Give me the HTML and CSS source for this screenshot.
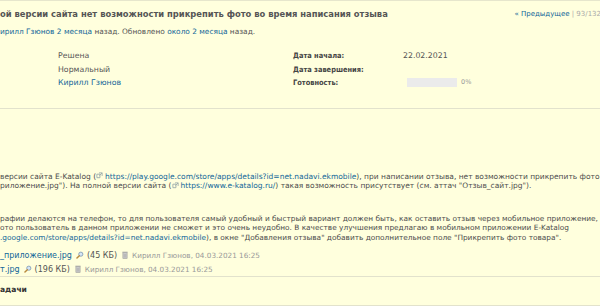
FILE: index.html
```html
<!DOCTYPE html>
<html lang="ru">
<head>
<meta charset="utf-8">
<link rel="stylesheet" href="styles.css">
</head>
<body>
<div class="issue">
  <div class="head">
    <h3 class="subject">ой версии сайта нет возможности прикрепить фото во время написания отзыва</h3>
    <div class="nav"><a href="#">« Предыдущее</a> | 93/132</div>
  </div>
  <p class="author"><a href="#">ирилл Гзюнов</a> <a href="#">2 месяца</a> назад. Обновлено <a href="#">около 2 месяца</a> назад.</p>

  <div class="attrs">
    <div class="val">Решена</div>
    <div class="lbl">Дата начала:</div>
    <div class="val">22.02.2021</div>

    <div class="val">Нормальный</div>
    <div class="lbl">Дата завершения:</div>
    <div class="val"></div>

    <div class="val"><a href="#">Кирилл Гзюнов</a></div>
    <div class="lbl">Готовность:</div>
    <div class="val progress"><span class="bar"></span><span class="pct">0%</span></div>
  </div>

  <hr class="sep sep1">

  <div class="wiki">
    <p class="p1">версии сайта E-Katalog (<a class="ext" href="#"><svg class="exticon" viewBox="0 0 8 8" width="7" height="7"><path d="M1 2.5h3.5v4h-3.5z" fill="none" stroke="#9aa" stroke-width="1"/><path d="M3.5 1h3.5v3.5M7 1L4 4" fill="none" stroke="#9aa" stroke-width="1"/></svg>https://play.google.com/store/apps/details?id=net.nadavi.ekmobile</a>), при написании отзыва, нет возможности прикрепить фото<br>риложение.jpg"). На полной версии сайта (<a class="ext" href="#"><svg class="exticon" viewBox="0 0 8 8" width="7" height="7"><path d="M1 2.5h3.5v4h-3.5z" fill="none" stroke="#9aa" stroke-width="1"/><path d="M3.5 1h3.5v3.5M7 1L4 4" fill="none" stroke="#9aa" stroke-width="1"/></svg>https://www.e-katalog.ru/</a>) такая возможность присутствует (см. аттач "Отзыв_сайт.jpg").</p>
    <p class="p2">рафии делаются на телефон, то для пользователя самый удобный и быстрый вариант должен быть, как оставить отзыв через мобильное приложение,<br>ото пользователь в данном приложении не сможет и это очень неудобно. В качестве улучшения предлагаю в мобильном приложении E-Katalog<br><a href="#">.google.com/store/apps/details?id=net.nadavi.ekmobile</a>), в окне "Добавления отзыва" добавить дополнительное поле "Прикрепить фото товара".</p>
  </div>

  <div class="attachments">
    <div class="att"><a href="#">_приложение.jpg</a><svg class="ico zoom" viewBox="0 0 10 10" width="8" height="8"><circle cx="6" cy="4" r="2.6" fill="#d6e6f4" stroke="#7a96b0" stroke-width="1"/><path d="M4.2 5.8L1.2 8.8" stroke="#b98a3e" stroke-width="1.8" stroke-linecap="round"/></svg><span class="size">(45 КБ)</span><svg class="ico trash" viewBox="0 0 8 10" width="6" height="8"><rect x="1.2" y="2" width="5.6" height="7.5" fill="#cfcfcf" stroke="#9a9a9a" stroke-width="0.8"/><rect x="0.5" y="0.6" width="7" height="1.4" fill="#a8a8a8"/><path d="M3 3.5v5M5 3.5v5" stroke="#999" stroke-width="0.7"/></svg><span class="who">Кирилл Гзюнов, 04.03.2021 16:25</span></div>
    <div class="att"><a href="#">т.jpg</a><svg class="ico zoom" viewBox="0 0 10 10" width="8" height="8"><circle cx="6" cy="4" r="2.6" fill="#d6e6f4" stroke="#7a96b0" stroke-width="1"/><path d="M4.2 5.8L1.2 8.8" stroke="#b98a3e" stroke-width="1.8" stroke-linecap="round"/></svg><span class="size">(196 КБ)</span><svg class="ico trash" viewBox="0 0 8 10" width="6" height="8"><rect x="1.2" y="2" width="5.6" height="7.5" fill="#cfcfcf" stroke="#9a9a9a" stroke-width="0.8"/><rect x="0.5" y="0.6" width="7" height="1.4" fill="#a8a8a8"/><path d="M3 3.5v5M5 3.5v5" stroke="#999" stroke-width="0.7"/></svg><span class="who">Кирилл Гзюнов, 04.03.2021 16:25</span></div>
  </div>

  <hr class="sep sep2">

  <p class="subtasks"><strong>адачи</strong></p>
  <hr class="sep sep3">
</div>
</body>
</html>
```
FILE: styles.css
```css
html, body {
  margin: 0;
  padding: 0;
  background: #ffffdd;
}
body {
  font-family: "DejaVu Sans", Verdana, sans-serif;
  color: #4c4c4c;
  font-size: 7.5px;
  width: 600px;
  height: 306px;
  overflow: hidden;
}
a { color: #169; text-decoration: none; }

.issue {
  border-top: 1px solid #e6e6cc;
  white-space: nowrap;
}
.head {
  display: flex;
  justify-content: space-between;
  align-items: center;
  margin-top: 6px;
  height: 14px;
}
.subject {
  margin: 0;
  font-family: "DejaVu Sans Condensed", "DejaVu Sans", sans-serif;
  font-size: 9.3px;
  font-weight: bold;
  color: #555;
  line-height: 14px;
}
.nav {
  font-size: 7px;
  color: #aaa;
  margin-right: -1px;
}
.author {
  margin: 5px 0 0 0;
  font-size: 7.4px;
  line-height: 12px;
  color: #555;
}
.attrs {
  display: grid;
  grid-template-columns: 235px 110px 1fr;
  grid-auto-rows: 13.5px;
  margin-top: 11px;
  padding-left: 58px;
  align-items: center;
  line-height: 13.5px;
  font-size: 7.8px;
}
.attrs .val { color: #555; }
.attrs .lbl {
  font-family: "DejaVu Sans Condensed", "DejaVu Sans", sans-serif;
  font-weight: bold;
  font-size: 7.4px;
  color: #444;
}
.progress { display: flex; align-items: center; gap: 4px; padding-left: 4px; }
.bar { display: inline-block; width: 50px; height: 9px; background: #ebebeb; }
.pct { font-size: 6.5px; color: #999; }

.sep {
  border: 0;
  border-top: 1px solid #e2e2cc;
  height: 0;
  margin: 0;
}
.sep1 { margin-top: 18px; }
.wiki { padding-top: 63px; }
.wiki p { margin: 0; line-height: 9.5px; }
.wiki .p1 { font-size: 7.5px; }
.wiki .p2 { margin-top: 23px; font-size: 7.38px; }
.exticon { margin-right: 2px; vertical-align: -0.5px; }

.attachments { margin-top: 6px; }
.att {
  display: flex;
  align-items: center;
  height: 14px;
  font-size: 8px;
}
.att .zoom { margin: 0 3px 0 4px; }
.att .trash { margin: 0 4px 0 5px; }
.size { color: #555; }
.who { color: #999; font-size: 7.25px; }

.subtasks {
  margin: 8px 0 0 0;
  line-height: 10px;
  font-size: 7.6px;
  color: #333;
}
.sep3 { margin-top: 10px; }
```
